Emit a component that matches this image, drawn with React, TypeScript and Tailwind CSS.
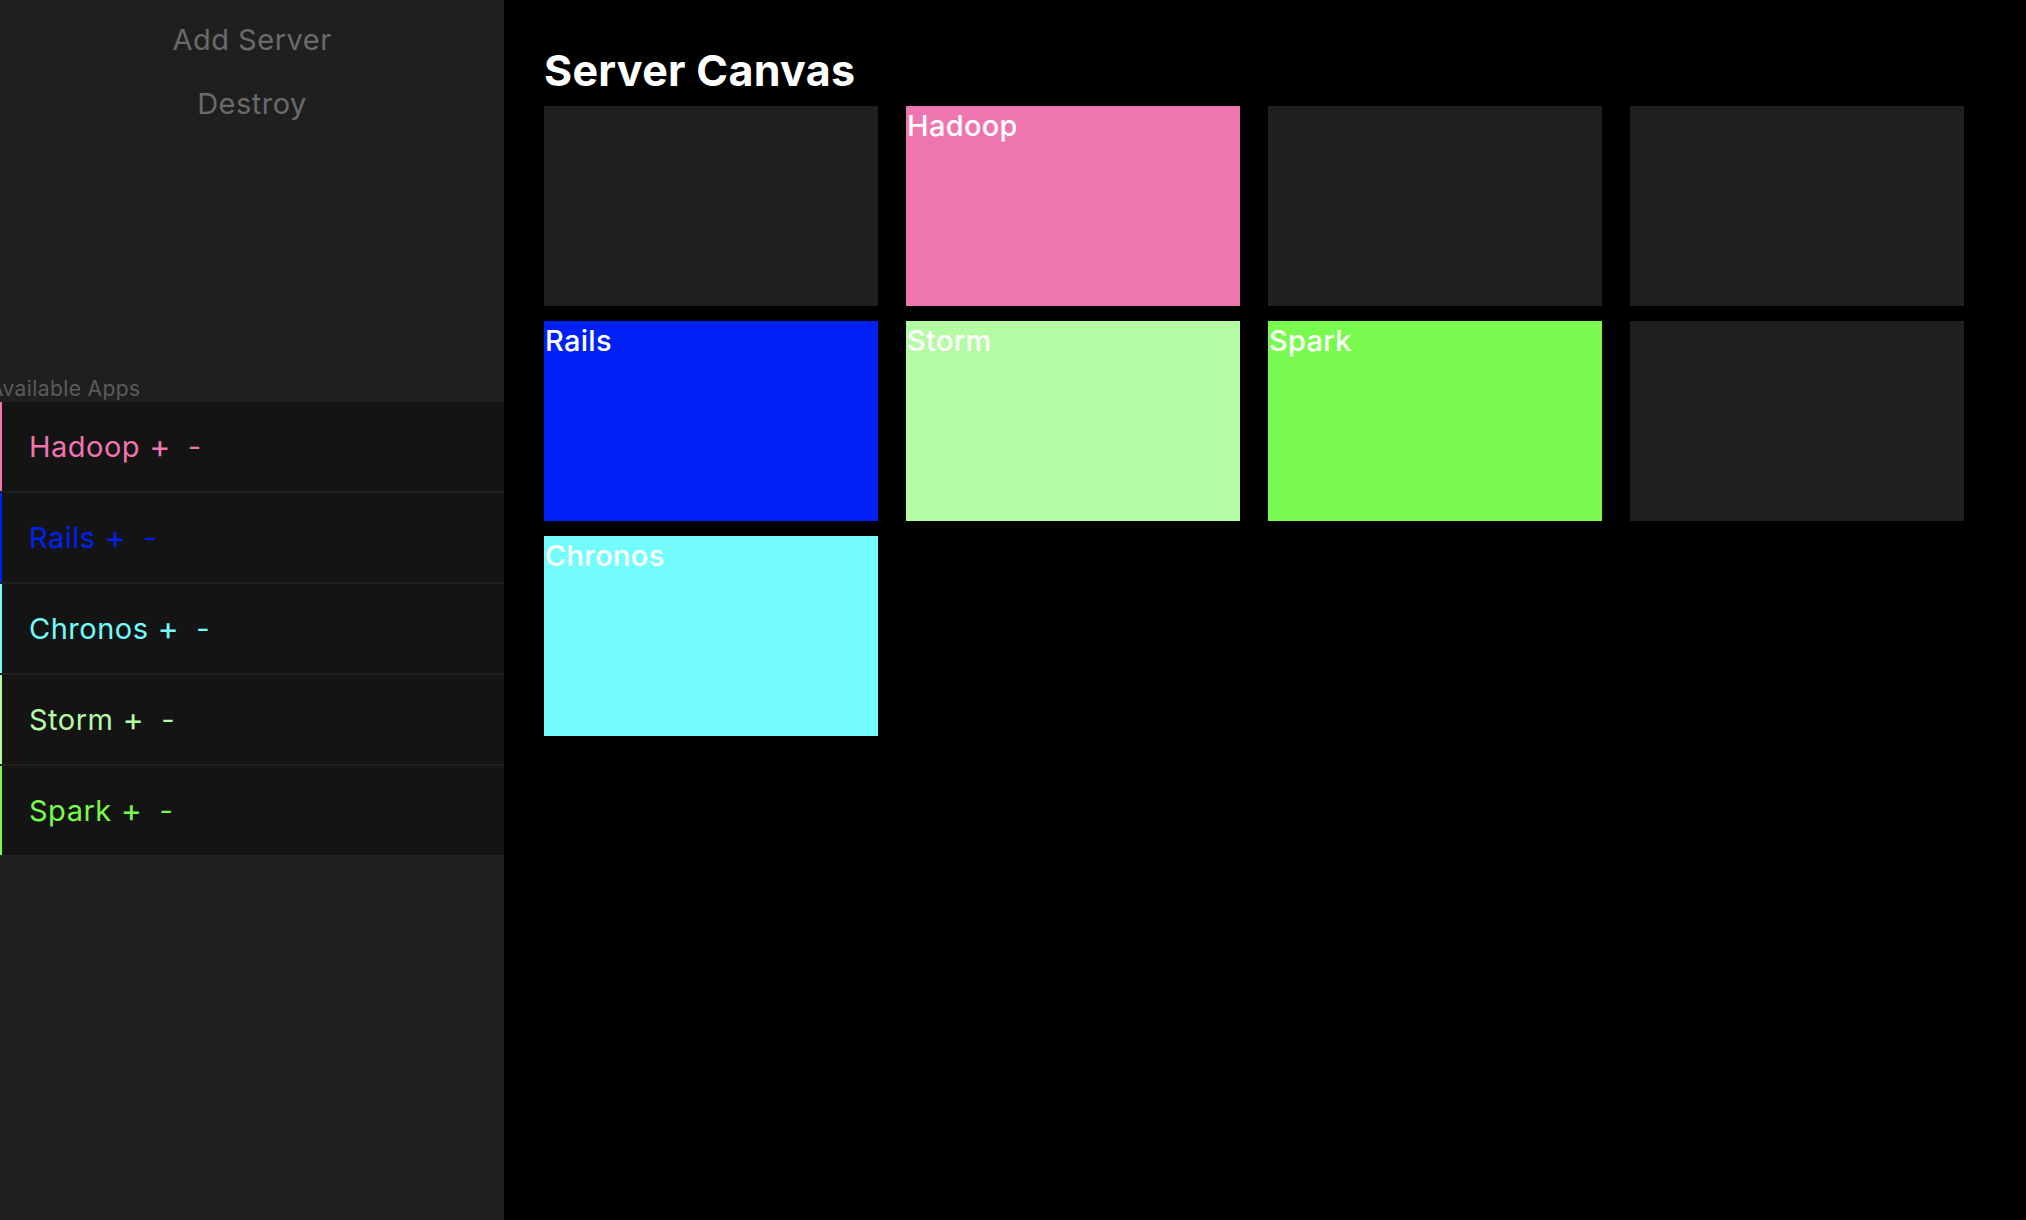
import React from "react";

type App = { name: string; text: string; border: string; tile: string };

const apps: App[] = [
  { name: "Hadoop", text: "text-[#ee75b0]", border: "border-[#ee75b0]", tile: "bg-[#ee75b0]" },
  { name: "Rails", text: "text-[#0021f5]", border: "border-[#0021f5]", tile: "bg-[#0021f5]" },
  { name: "Chronos", text: "text-[#72fcfc]", border: "border-[#72fcfc]", tile: "bg-[#72fcfc]" },
  { name: "Storm", text: "text-[#b4fba4]", border: "border-[#b4fba4]", tile: "bg-[#b4fba4]" },
  { name: "Spark", text: "text-[#78fa4f]", border: "border-[#78fa4f]", tile: "bg-[#78fa4f]" },
];

// servers on the canvas, null = empty slot
const servers: (string | null)[] = [null, "Hadoop", null, null, "Rails", "Storm", "Spark", null, "Chronos"];

const tileBg = (name: string | null) => {
  const app = apps.find((a) => a.name === name);
  return app ? app.tile : "bg-[#1f1f1f]";
};

export default function App() {
  return (
    <div className="flex h-screen w-full bg-black font-['Inter',sans-serif]">
      <aside className="flex w-[504px] shrink-0 flex-col bg-[#1f1f1f]">
        <div className="h-[376px] pt-[8px] text-center text-[29px] tracking-[0.5px] text-[#6a6a6a]">
          <div className="leading-[64px]">Add Server</div>
          <div className="leading-[64px]">Destroy</div>
        </div>
        <div className="ml-[-11px] h-[26px] text-[21px] leading-[26px] tracking-[0.4px] text-[#5b5b5b]">
          Available Apps
        </div>
        <ul className="flex flex-col gap-[2px]">
          {apps.map((app) => (
            <li
              key={app.name}
              className={`flex h-[89px] items-center border-l-2 bg-[#141414] pl-[27px] text-[29px] tracking-[0.5px] ${app.border} ${app.text}`}
            >
              <span>{app.name}</span>
              <span className="ml-[9px] text-[32px]">+</span>
              <span className="ml-[17px]">-</span>
            </li>
          ))}
        </ul>
      </aside>

      <main className="flex-1 pl-[40px]">
        <h1 className="pt-[40px] text-[43px] font-bold leading-[60px] tracking-[0.3px] text-white">
          Server Canvas
        </h1>
        <div className="mt-[6px] grid grid-cols-[repeat(4,334px)] gap-x-[28px] gap-y-[15px]">
          {servers.map((s, i) => (
            <div key={i} className={`h-[200px] ${tileBg(s)}`}>
              {s && (
                <div className="pl-[1px] text-[29px] leading-[40px] font-medium tracking-[0.3px] text-white">
                  {s}
                </div>
              )}
            </div>
          ))}
        </div>
      </main>
    </div>
  );
}
